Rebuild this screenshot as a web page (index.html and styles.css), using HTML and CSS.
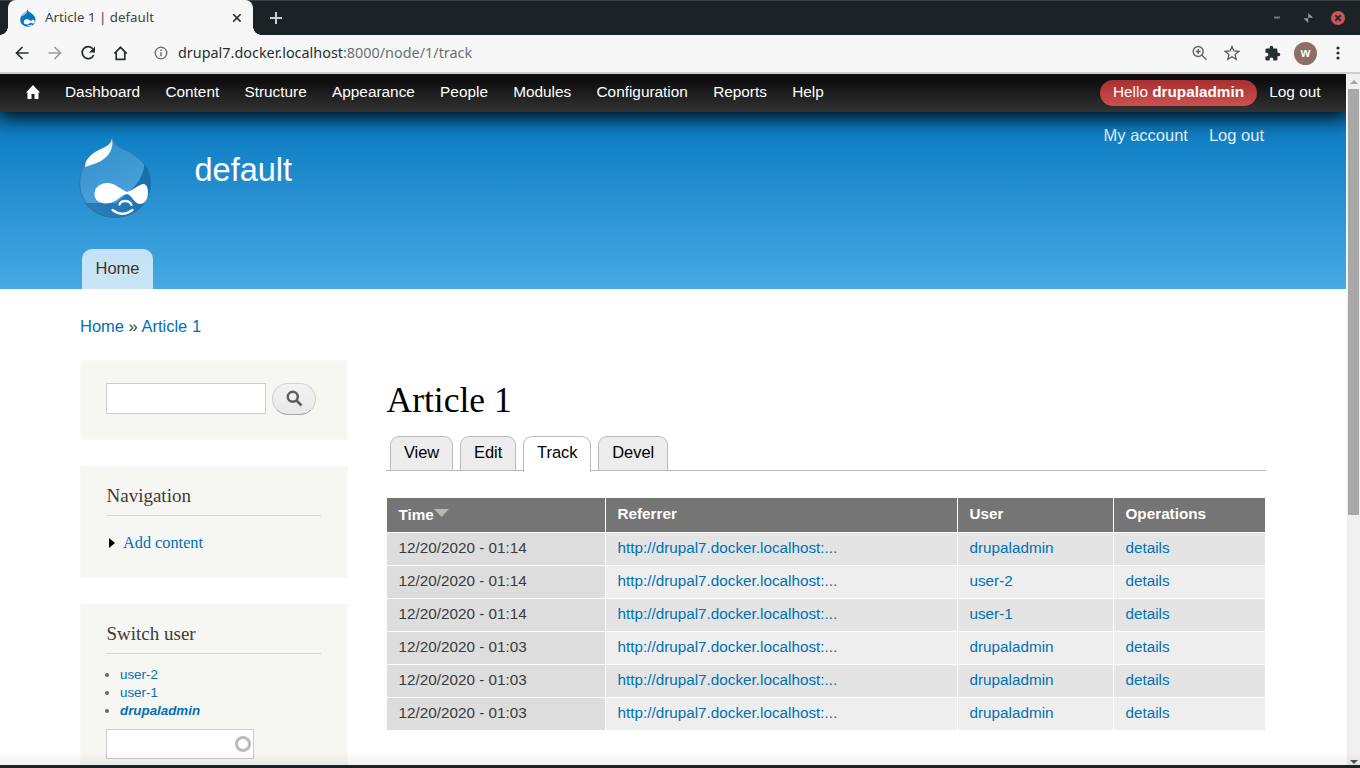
FILE: index.html
```html
<!DOCTYPE html>
<html lang="en">
<head>
<meta charset="utf-8">
<title>Article 1 | default</title>
<link rel="stylesheet" href="styles.css">
</head>
<body>
<div class="window">
  <header class="titlebar">
    <div class="browser-tab">
      <svg class="favicon" width="16" height="18" viewBox="0 0 76 84"><path fill="#0876bf" d="M36 1c2 9 7 12 18 19 13 9 20 20 20 32 0 18-16 31-36 31S1 69 1 50C1 36 10 25 20 18 29 12 34 9 36 1z"/><path fill="#9ccbea" d="M34 12c-3 8-8 12-16 17-6 4-11 9-9 0C14 20 28 16 34 5z"/><path fill="#fff" d="M18 62c0-16 20-18 33-5 10-10 19-7 19 2s-8 13-19 4c-12 12-33 12-33-1zM36 72q10 9 21 1l1 4q-12 7-23-2z"/></svg>
      <span class="tab-title">Article 1 | default</span>
      <svg class="tab-close" width="10" height="10" viewBox="0 0 10 10"><path d="M1.2 1.2l7.4 7.4M8.6 1.2L1.2 8.6" stroke="#263033" stroke-width="1.6"/></svg>
    </div>
    <svg class="new-tab" width="14" height="14" viewBox="0 0 14 14"><path d="M7 1v12M1 7h12" stroke="#ccd0d0" stroke-width="2"/></svg>
    <div class="window-controls">
      <svg width="76" height="16" viewBox="0 0 76 16"><path d="M2 7.500h6" stroke="#737879" stroke-width="2"/><path d="M32 8.500h4v4zM36.500 3.500v4h4z" fill="#929798" stroke="#929798" stroke-width=".6"/><circle cx="66" cy="8" r="7" fill="#cf535b"/><path d="M63.3 5.3l5.4 5.4M68.7 5.3l-5.4 5.4" stroke="#263033" stroke-width="2"/></svg>
    </div>
  </header>
  <div class="addressbar">
    <svg class="nav-icons" width="116" height="18" viewBox="0 0 116 18" fill="none" stroke="#263033" stroke-width="1.7"><path d="M14.500 9H2.500M8.500 3l-6 6 6 6"/><path stroke="#9a9e9f" d="M34.500 9h12M40.500 3l6 6-6 6"/><path d="M78.800 4.8A6 6 0 1 0 79.700 11"/><path d="M81 2.500v6h-6z" fill="#263033" stroke="none"/><path d="M100.300 9.500l6.200-6.200 6.200 6.200M102.200 8v7.300h8.600V8"/></svg>
    <svg class="info-icon" width="14" height="14" viewBox="0 0 14 14"><circle cx="7" cy="7" r="5.8" fill="none" stroke="#64696b" stroke-width="1.3"/><path d="M7 6.2v4M7 3.6v1.5" stroke="#64696b" stroke-width="1.4"/></svg>
    <div class="url">drupal7.docker.localhost<span class="url-path">:8000/node/1/track</span></div>
    <svg class="zoom-icon" width="16" height="16" viewBox="0 0 16 16" fill="none" stroke="#5d6365" stroke-width="1.4"><circle cx="6.200" cy="6.500" r="5"/><path d="M9.700 10l4.800 4.800M3.800 6.5h4.800M6.200 4.100v4.800"/></svg>
    <svg class="star-icon" width="16" height="16" viewBox="0 0 16 16"><path d="M8 1.500l1.900 4.500 4.900.4-3.700 3.200 1.100 4.800L8 11.800l-4.200 2.600 1.100-4.800-3.700-3.200 4.900-.4z" fill="none" stroke="#555b5d" stroke-width="1.3"/></svg>
    <svg class="puzzle-icon" width="17" height="17" viewBox="0 0 24 24"><path fill="#263033" d="M20.5 11H19V7a2 2 0 0 0-2-2h-4V3.500a2.500 2.500 0 0 0-5 0V5H4a2 2 0 0 0-2 2v3.800h1.500a2.700 2.700 0 0 1 0 5.400H2V20a2 2 0 0 0 2 2h3.800v-1.500a2.700 2.700 0 0 1 5.400 0V22H17a2 2 0 0 0 2-2v-4h1.500a2.500 2.500 0 0 0 0-5z"/></svg>
    <div class="avatar">w</div>
    <svg class="menu-icon" width="4" height="16" viewBox="0 0 4 16" fill="#263033"><circle cx="2" cy="3" r="1.6"/><circle cx="2" cy="8" r="1.6"/><circle cx="2" cy="13" r="1.6"/></svg>
  </div>
  <div class="viewport">
    <div class="page">
      <nav class="toolbar">
        <svg class="home-icon" width="14" height="14" viewBox="0 0 14 14"><path fill="#fff" d="M7 0L0 7.500h1.500V14h4V9h3v5h4V7.500H14z"/></svg>
        <a>Dashboard</a><a>Content</a><a>Structure</a><a>Appearance</a><a>People</a><a>Modules</a><a>Configuration</a><a>Reports</a><a>Help</a>
        <div class="toolbar-user"><span class="hello">Hello <b>drupaladmin</b></span><a>Log out</a></div>
      </nav>
      <div class="site-header">
        <div class="secondary-menu"><a>My account</a><a>Log out</a></div>
        <div class="branding">
          <svg class="logo" width="74" height="83" viewBox="0 0 74 83">
            <defs>
              <linearGradient id="drop" x1="0" y1="0" x2=".3" y2="1"><stop offset="0" stop-color="#2b90d0"/><stop offset=".45" stop-color="#3b97d2"/><stop offset=".8" stop-color="#4aa0d8"/></linearGradient>
              <linearGradient id="shine" x1="1" y1="0" x2="0" y2="1"><stop offset="0" stop-color="#fff" stop-opacity=".75"/><stop offset=".4" stop-color="#fff"/><stop offset="1" stop-color="#fff"/></linearGradient>
              <linearGradient id="shade" x1="1" y1=".3" x2="0" y2="1"><stop offset="0" stop-color="#186fae"/><stop offset="1" stop-color="#2f7fb9"/></linearGradient>
              <clipPath id="shape"><path d="M34 1c3 7 7 9 17 14 13 7 22 18 22 32 0 20-16 35-36 35S1 67 1 47C1 33 8 22 18 16 29 10 33 8 34 1z"/></clipPath>
            </defs>
            <g clip-path="url(#shape)">
              <rect width="74" height="83" fill="url(#drop)"/>
              <path fill="url(#shade)" d="M66 24C68 42 54 54 38 67H4v17h70V28z"/>
              <path d="M34 1c3 7 7 9 17 14 13 7 22 18 22 32 0 20-16 35-36 35S1 67 1 47C1 33 8 22 18 16 29 10 33 8 34 1z" fill="none" stroke="#286f9f" stroke-opacity=".7" stroke-width="2.500"/>
            </g>
            <path fill="url(#shine)" d="M34 2c2 11-3 18-11 23-6 3-11 4-16 6 0-7 5-12 12-16 8-4 14-6 15-13z"/>
            <path fill="#fff" d="M16.500 58c0-7 6-11 13-11 8 0 12 6 19.500 9 7-2 12-8 17-8 3 1 4 4 4 9 0 7-4 11-8 11-6 0-8-9-13-10-6 0-10 9.500-21 9.500-7 0-11.500-3.500-11.500-9.500z"/>
            <path d="M41.500 68.500q1-3.500 6-3.500 4.500 0 6 4M34.500 74q10 7.500 20 0" fill="none" stroke="#eef7fd" stroke-width="2.300" stroke-linecap="round"/>
          </svg>
          <div class="site-name">default</div>
        </div>
        <div class="main-menu"><a>Home</a></div>
      </div>
      <div class="content-wrap">
        <div class="breadcrumb"><a>Home</a> » <a>Article 1</a></div>
        <div class="columns">
          <aside class="sidebar">
            <section class="block search-block">
              <div class="text-input search-input"></div>
              <div class="search-button"><svg width="18" height="18" viewBox="0 0 18 18" fill="none" stroke="#5c5c5c"><circle cx="7.800" cy="6.800" r="5" stroke-width="2.500"/><path d="M11.500 10.500l5 5" stroke-width="2.600"/></svg></div>
            </section>
            <section class="block nav-block">
              <h2>Navigation</h2>
              <div class="menu-leaf"><svg width="6" height="10" viewBox="0 0 6 10"><path d="M0 0l6 5-6 5z"/></svg><a>Add content</a></div>
            </section>
            <section class="block switch-block">
              <h2>Switch user</h2>
              <ul><li><a>user-2</a></li><li><a>user-1</a></li><li><a class="current">drupaladmin</a></li></ul>
              <div class="text-input user-input"><i class="throbber"></i></div>
            </section>
          </aside>
          <main class="main">
            <h1>Article 1</h1>
            <div class="tabs"><a>View</a><a>Edit</a><a class="active">Track</a><a>Devel</a></div>
            <table>
              <colgroup><col class="c-time"><col class="c-ref"><col class="c-user"><col class="c-op"></colgroup>
              <thead><tr><th class="sorted">Time<svg width="15" height="9" viewBox="0 0 15 9"><path d="M0 0h15L7.500 8z" fill="#b7b7b7"/></svg></th><th>Referrer</th><th>User</th><th>Operations</th></tr></thead>
              <tbody>
                <tr><td>12/20/2020 - 01:14</td><td><a>http://drupal7.docker.localhost:...</a></td><td><a>drupaladmin</a></td><td><a>details</a></td></tr>
                <tr><td>12/20/2020 - 01:14</td><td><a>http://drupal7.docker.localhost:...</a></td><td><a>user-2</a></td><td><a>details</a></td></tr>
                <tr><td>12/20/2020 - 01:14</td><td><a>http://drupal7.docker.localhost:...</a></td><td><a>user-1</a></td><td><a>details</a></td></tr>
                <tr><td>12/20/2020 - 01:03</td><td><a>http://drupal7.docker.localhost:...</a></td><td><a>drupaladmin</a></td><td><a>details</a></td></tr>
                <tr><td>12/20/2020 - 01:03</td><td><a>http://drupal7.docker.localhost:...</a></td><td><a>drupaladmin</a></td><td><a>details</a></td></tr>
                <tr><td>12/20/2020 - 01:03</td><td><a>http://drupal7.docker.localhost:...</a></td><td><a>drupaladmin</a></td><td><a>details</a></td></tr>
              </tbody>
            </table>
          </main>
        </div>
      </div>
    </div>
    <div class="scrollbar">
      <svg width="8" height="4" viewBox="0 0 8 4"><path d="M0 4l4-4 4 4z" fill="#a3a3a3"/></svg>
      <div class="thumb"></div>
      <svg class="arrow-down" width="8" height="4" viewBox="0 0 8 4"><path d="M0 0h8L4 4z" fill="#505050"/></svg>
    </div>
    <div class="bottom-shade"></div>
  </div>
</div>
</body>
</html>
```
FILE: styles.css
```css
* { box-sizing: border-box; }
body { margin: 0; overflow: hidden; background: #1c2326; font-family: "Liberation Sans", Arial, sans-serif; color: #3b3b3b; }
.window { width: 1360px; height: 768px; display: flex; flex-direction: column; border-bottom: 3px solid #1c2326; }
.titlebar { height: 35px; flex: none; display: flex; align-items: center; background: #1c2326; border-top: 1px solid #3a4042; padding-left: 8px; }
.browser-tab { width: 245px; height: 35px; margin-top: -1px; position: relative; display: flex; align-items: center; padding: 0 11px 0 12px; background: #f7f7f7; border-radius: 8px 8px 0 0; }
.browser-tab::before, .browser-tab::after { content: ""; position: absolute; bottom: 0; width: 8px; height: 8px; }
.browser-tab::before { left: -8px; background: radial-gradient(circle at 0 0, transparent 7.5px, #f7f7f7 8px); }
.browser-tab::after { right: -8px; background: radial-gradient(circle at 100% 0, transparent 7.5px, #f7f7f7 8px); }
.favicon { flex: none; }
.tab-title { font: 13.300px/18px "Noto Sans", sans-serif; color: #3b4447; margin: -1px 0 0 9px; white-space: nowrap; }
.tab-close { margin-left: auto; }
.new-tab { margin: -1px 0 0 15.500px; }
.window-controls { display: flex; margin-left: auto; margin-right: 12px; }
.addressbar { height: 39px; flex: none; display: flex; align-items: center; background: #f7f7f7; border-bottom: 2px solid #cfcfcf; padding: 0 0 1px 14px; }
.nav-icons { flex: none; }
.info-icon { flex: none; margin-left: 24px; }
.url { margin: -1px 0 0 10px; font: 14.400px/20px "Noto Sans", sans-serif; color: #263033; width: 1014px; flex: none; white-space: nowrap; }
.url-path { color: #6a7072; }
.zoom-icon, .star-icon, .puzzle-icon, .menu-icon { flex: none; }
.star-icon { margin-left: 16px; }
.puzzle-icon { margin-left: 24px; }
.avatar { flex: none; width: 23px; height: 23px; margin-left: 13px; border-radius: 50%; background: #8d6e63; color: #fff; font: 600 12px/21px "Noto Sans", sans-serif; text-align: center; }
.menu-icon { margin-left: 19px; margin-right: 20px; }
.viewport { flex: 1; min-height: 0; display: flex; position: relative; overflow: hidden; background: #fff; }
.page { width: 1346px; flex: none; overflow: hidden; }
.toolbar { height: 38px; display: flex; align-items: center; position: relative; background: linear-gradient(#0f0f0f 20%, #333); box-shadow: 0 3px 20px 3px rgba(0,0,0,.95); color: #fff; font-size: 15.370px; line-height: 18px; padding: 0 25.5px 2px 26px; }
.toolbar > a { margin-right: 25.250px; }
.home-icon { margin: -1px 25px 0 0; }
.toolbar-user { margin-left: auto; display: flex; align-items: center; }
.toolbar-user a { margin-left: 12.500px; }
.hello { height: 26px; line-height: 24px; margin-top: 2px; padding: 0 12.700px; border-radius: 13px; background: linear-gradient(#a83030, #cd5050); font-size: 15.320px; }
.site-header { height: 177px; background: linear-gradient(#0779bf, #48a9e4); color: #fff; padding: 13px 82px 0; font-size: 16.5px; }
.secondary-menu { display: flex; justify-content: flex-end; gap: 21px; height: 11px; line-height: 20px; color: #e7f2fa; }
.branding { display: flex; height: 113px; margin-left: -4px; }
.logo { flex: none; margin: -.5px 0 0 -.5px; }
.site-name { margin: 15px 0 0 43px; font-size: 32.500px; line-height: 38px; }
.main-menu a { display: block; width: 71px; height: 40px; border-radius: 10px 10px 0 0; background: rgba(255,255,255,.7); color: #333; text-align: center; line-height: 39px; text-shadow: 0 1px #eee; }
.content-wrap { padding: 27px 80px 0; }
.breadcrumb { font-size: 16.500px; line-height: 20px; }
a { text-decoration: none; }
.breadcrumb a, td a, .block a { color: #0071b3; }
.columns { display: flex; gap: 39px; padding-top: 24px; }
.sidebar { width: 268px; flex: none; display: flex; flex-direction: column; gap: 26px; }
.block { background: #f6f6f2; border: 1px solid #f9f9f9; padding: 0 26px 0 25px; }
.search-block { height: 80px; display: flex; padding-top: 22px; }
.text-input { background: #fff; border: 1px solid #ccc; }
.search-input { width: 160px; height: 31px; }
.search-button { width: 44px; height: 32px; margin-left: 6px; border: 1px solid #d2d2d2; border-bottom-color: #aaa; border-radius: 16px; background: linear-gradient(#f3f3f3, #e8e8e8); display: flex; align-items: center; justify-content: center; }
.nav-block { height: 112px; }
.block h2 { margin: 0 0 17px; padding-top: 17px; height: 49px; border-bottom: 1px solid #d6d6d6; font: 19px/24px "Liberation Serif", serif; color: #3b3b3b; text-indent: .5px; }
.menu-leaf { display: flex; align-items: center; gap: 8px; padding-left: 3px; font: 16.300px/20px "Liberation Serif", serif; }
.switch-block { height: 190px; }
.switch-block h2 { margin-bottom: 12px; }
.switch-block ul { margin: 0; padding-left: 14px; font-size: 13.350px; line-height: 18px; color: #666; }
.current { font-weight: bold; font-style: italic; }
.user-input { width: 148px; height: 30px; margin-top: 9px; display: flex; align-items: center; justify-content: flex-end; padding-right: 2px; }
.throbber { width: 16px; height: 16px; border: 3px solid #bbb; border-radius: 50%; }
.main { width: 879px; }
h1 { margin: 18px 0 0 -.5px; font: 35.500px/44px "Liberation Serif", serif; color: #000; }
.tabs { display: flex; gap: 6.900px; height: 35px; margin-top: 14px; margin-left: -1px; padding-left: 4px; border-bottom: 1px solid #bbb; font-size: 16.470px; }
.tabs a { height: 34px; padding: 0 12.900px; border: 1px solid #bbb; border-bottom: 0; border-radius: 9px 9px 0 0; background: #ededed; color: #000; line-height: 31px; }
.tabs a.active { height: 36px; background: #fff; }
table { width: 878px; margin-top: 27px; table-layout: fixed; border-collapse: collapse; font-size: 15.280px; line-height: 18px; }
.c-time { width: 218px; }
.c-ref { width: 352px; }
.c-user { width: 156px; }
.c-op { width: 152px; }
th { height: 34px; padding: 0 11px 2px 12px; text-align: left; background: #757575; color: #fff; border-left: 1px solid #fff; }
th:first-child, td:first-child { border-left: 0; padding-left: 11.500px; }
th.sorted { padding-bottom: 0; padding-top: 1px; }
th svg { margin-left: 0; vertical-align: 2px; }
td { height: 33px; padding: 0 11px 2px 12px; border-left: 1px solid #fff; border-top: 1px solid #fff; background: #eee; }
tr:nth-child(odd) td { background: #e4e4e4; }
tbody tr td:first-child { background: #ddd; }
.scrollbar { width: 14px; background: #f0f0f0; border-left: 1px solid #fafafa; display: flex; flex-direction: column; align-items: center; padding: 6px 0 1px; }
.scrollbar svg { flex: none; }
.thumb { width: 11px; height: 426px; margin-top: 5px; background: #a8a8a8; }
.arrow-down { margin-top: auto; }
.bottom-shade { position: absolute; left: 0; right: 0; bottom: 0; height: 14px; background: linear-gradient(transparent, rgba(0,0,0,.055)); }
```
